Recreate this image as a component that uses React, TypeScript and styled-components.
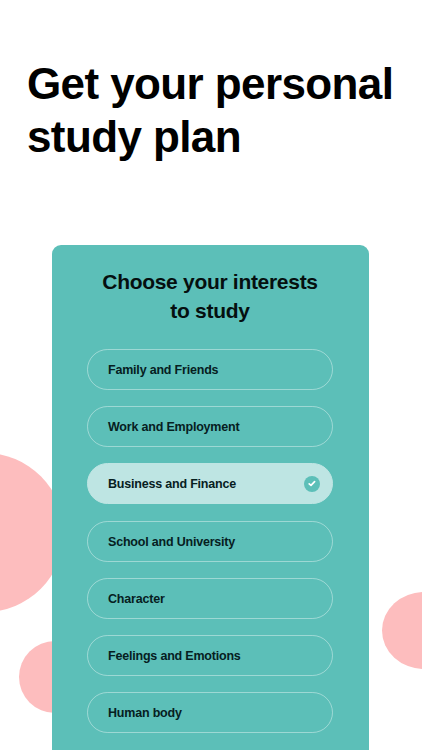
import React from "react";
import styled, { createGlobalStyle } from "styled-components";

const interests = [
  "Family and Friends",
  "Work and Employment",
  "Business and Finance",
  "School and University",
  "Character",
  "Feelings and Emotions",
  "Human body",
];

const SELECTED = "Business and Finance";

export default function App() {
  return (
    <>
      <GlobalStyle />
      <Page>
        <BigBlob />
        <SmallBlob />
        <RightBlob />
        <Heading>
          Get your personal
          <br />
          study plan
        </Heading>
        <Card>
          <CardTitle>
            Choose your interests
            <br />
            to study
          </CardTitle>
          <List>
            {interests.map((name) => (
              <Pill key={name} $selected={name === SELECTED}>
                <PillLabel>{name}</PillLabel>
                {name === SELECTED && (
                  <CheckBadge>
                    <svg width="8" height="7" viewBox="0 0 8 7" fill="none">
                      <path
                        d="M1.2 3.8L3 5.3L6.6 1.6"
                        stroke="#fff"
                        strokeWidth="1.7"
                        strokeLinecap="round"
                        strokeLinejoin="round"
                      />
                    </svg>
                  </CheckBadge>
                )}
              </Pill>
            ))}
          </List>
        </Card>
      </Page>
    </>
  );
}

const GlobalStyle = createGlobalStyle`
  html,
  body {
    margin: 0;
    padding: 0;
    background: #fff;
  }
  body {
    font-family: "Liberation Sans", Arial, sans-serif;
  }
`;

const Page = styled.div`
  position: relative;
  width: 422px;
  height: 750px;
  overflow: hidden;
  background: #fff;
  display: flex;
  flex-direction: column;
`;

const Blob = styled.div`
  position: absolute;
  background: #fdbdbe;
  border-radius: 50%;
`;

const BigBlob = styled(Blob)`
  left: -94px;
  top: 453px;
  width: 158px;
  height: 159px;
`;

const SmallBlob = styled(Blob)`
  left: 19px;
  top: 641px;
  width: 72px;
  height: 72px;
`;

const RightBlob = styled(Blob)`
  left: 382px;
  top: 592px;
  width: 84px;
  height: 77px;
`;

const Heading = styled.h1`
  position: relative;
  margin: 0;
  padding: 57px 0 0 27px;
  font-size: 44px;
  line-height: 53px;
  letter-spacing: -0.6px;
  font-weight: 700;
  color: #000;
  white-space: nowrap;
`;

const Card = styled.section`
  position: relative;
  box-sizing: border-box;
  flex: 1;
  width: 317px;
  margin: 82px 0 0 52px;
  padding: 22px 36px 0 35px;
  background: #5cbfb8;
  border-radius: 9px 9px 0 0;
`;

const CardTitle = styled.h2`
  margin: 0;
  font-size: 21px;
  line-height: 29px;
  letter-spacing: -0.3px;
  font-weight: 700;
  color: #050f0f;
  text-align: center;
`;

const List = styled.div`
  display: flex;
  flex-direction: column;
  gap: 16.3px;
  margin-top: 23.7px;
`;

const Pill = styled.div<{ $selected: boolean }>`
  box-sizing: border-box;
  display: flex;
  align-items: center;
  justify-content: space-between;
  height: 41px;
  padding: 0 12px 0 20px;
  border-radius: 21px;
  border: 1px solid ${(p) => (p.$selected ? "#bee5e3" : "rgba(255, 255, 255, 0.4)")};
  background: ${(p) => (p.$selected ? "#bee5e3" : "transparent")};
`;

const PillLabel = styled.span`
  padding-top: 1px;
  font-size: 12.5px;
  letter-spacing: -0.2px;
  font-weight: 700;
  color: #06201f;
`;

const CheckBadge = styled.span`
  display: flex;
  align-items: center;
  justify-content: center;
  width: 16px;
  height: 16px;
  border-radius: 50%;
  background: #5cbfb8;
`;
